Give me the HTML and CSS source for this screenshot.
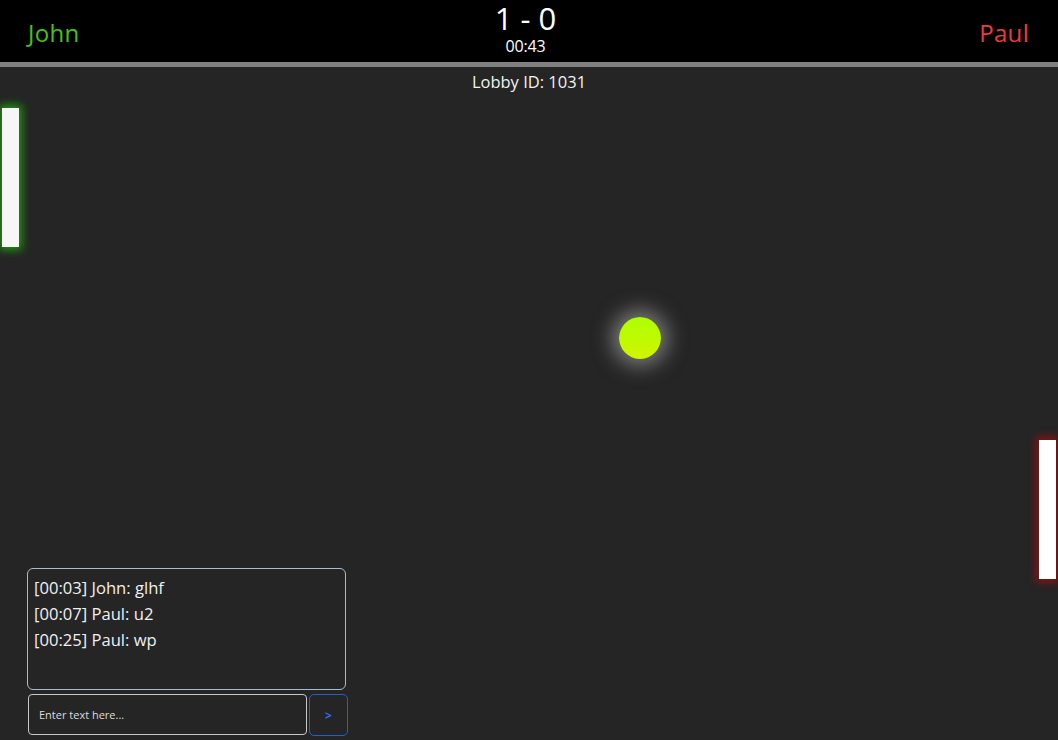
FILE: index.html
```html
<!DOCTYPE html>
<html>
<head>
<meta charset="utf-8">
<link rel="stylesheet" href="styles.css">
</head>
<body>
<header class="scorebar">
  <div class="player player-left">John</div>
  <div class="score">
    <div class="score-value">1 - 0</div>
    <div class="timer">00:43</div>
  </div>
  <div class="player player-right">Paul</div>
</header>
<div class="divider"></div>
<main class="field">
  <div class="lobby">Lobby ID: 1031</div>
  <div class="paddle paddle-left"></div>
  <div class="paddle paddle-right"></div>
  <div class="ball"></div>
  <div class="chat">
    <div class="chat-log">
      <div class="msg">[00:03] John: glhf</div>
      <div class="msg">[00:07] Paul: u2</div>
      <div class="msg">[00:25] Paul: wp</div>
    </div>
    <div class="chat-input-row">
      <input class="chat-input" type="text" placeholder="Enter text here...">
      <button class="chat-send">&gt;</button>
    </div>
  </div>
</main>
</body>
</html>
```
FILE: styles.css
```css
html, body {
  margin: 0;
  padding: 0;
  height: 100%;
  background: #252525;
  font-family: "Open Sans", "Liberation Sans", sans-serif;
  color: #f0f0f0;
  overflow: hidden;
}

.scorebar {
  height: 62px;
  background: #000;
  display: flex;
  align-items: center;
  justify-content: space-between;
  padding: 0 29px 0 28px;
  position: relative;
}

.player {
  font-size: 24px;
  line-height: 30px;
  margin-top: 3px;
  letter-spacing: 0.3px;
}

.player-left { color: #44c411; }
.player-right { color: #ee3b3b; }

.score {
  position: absolute;
  left: 0;
  right: 0;
  top: 0;
  padding-right: 7px;
  display: flex;
  flex-direction: column;
  align-items: center;
  pointer-events: none;
}

.score-value {
  font-size: 31px;
  line-height: 36px;
  color: #fff;
}

.timer {
  font-size: 16px;
  line-height: 20px;
  color: #fff;
  letter-spacing: -0.2px;
}

.divider {
  height: 5px;
  background: #808080;
}

.field {
  position: relative;
  height: calc(100% - 67px);
}

.lobby {
  text-align: center;
  font-size: 16.5px;
  line-height: 20px;
  padding-top: 5px;
  color: #f2f2f2;
}

.paddle {
  position: absolute;
  width: 17px;
  height: 139px;
  background: #f6f6f6;
}

.paddle-left {
  left: 2px;
  top: 41px;
  box-shadow: 0 0 8px 3px rgba(35, 170, 15, 0.85);
}

.paddle-right {
  left: 1039px;
  top: 373px;
  background: #fff;
  box-shadow: 0 0 8px 3px rgba(150, 15, 15, 0.9);
}

.ball {
  position: absolute;
  left: 619px;
  top: 250px;
  width: 42px;
  height: 42px;
  border-radius: 50%;
  background: linear-gradient(#aeff00, #d0f500);
  box-shadow: 0 0 20px 7px rgba(210, 210, 210, 0.5);
}

.chat {
  position: absolute;
  left: 27px;
  top: 501px;
  width: 321px;
}

.chat-log {
  border: 1px solid #a8bccf;
  border-radius: 6px;
  padding: 6px 0 0 6px;
  box-sizing: border-box;
  width: 319px;
  height: 122px;
}

.msg {
  font-size: 16.6px;
  line-height: 26px;
  color: #f0f0f0;
}

.chat-input-row {
  display: flex;
  gap: 2px;
  margin-top: 4px;
  margin-left: 1px;
}

.chat-input {
  width: 279px;
  height: 41px;
  box-sizing: border-box;
  background: transparent;
  border: 1px solid #c8c8c8;
  border-radius: 4px;
  padding: 0 10px;
  font-family: "Open Sans", "Liberation Sans", sans-serif;
  font-size: 11px;
  color: #ddd;
  outline: none;
}

.chat-input::placeholder {
  color: #dcdcdc;
}

.chat-send {
  width: 39px;
  height: 42px;
  box-sizing: border-box;
  background: transparent;
  border: 1px solid #1e5fd6;
  border-radius: 5px;
  color: #2f72f0;
  font-family: "Open Sans", "Liberation Sans", sans-serif;
  font-size: 12px;
  font-weight: bold;
  padding: 0;
}
```
